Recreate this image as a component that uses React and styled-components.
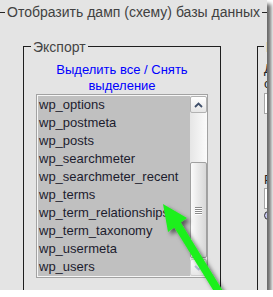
import React from "react";
import styled, { createGlobalStyle } from "styled-components";

const GlobalStyle = createGlobalStyle`
  html, body { margin: 0; padding: 0; background: #ffffff; }
  body { font-family: "Liberation Sans", Arial, sans-serif; }
  * { box-sizing: border-box; }
`;

const Frame = styled.div`
  position: relative;
  width: 267px;
  height: 290px;
  overflow: hidden;
  background: #e4e4e4;
  box-shadow: 4px 4px 4px rgba(0, 0, 0, 0.6);
`;

const OuterFieldset = styled.fieldset`
  margin: 0;
  width: 360px;
  min-width: 0;
  padding: 14px 0 0 0;
  border: none;
  border-top: 1px solid #262626;
`;

const OuterLegend = styled.legend`
  margin-left: 5px;
  padding: 0 2px;
  font-size: 14px;
  line-height: 24px;
  color: #414141;
  white-space: nowrap;
`;

const Row = styled.div`
  display: flex;
  gap: 36px;
  align-items: flex-start;
  padding-left: 23px;
`;

const Panel = styled.fieldset`
  flex: none;
  margin: 0;
  min-width: 0;
  width: ${(p) => p.$width}px;
  min-height: 290px;
  padding: ${(p) => p.$pad};
  border: 1px solid #1e1e1e;
`;

const PanelLegend = styled.legend`
  margin-left: ${(p) => p.$offset}px;
  padding: 1px 2px 0;
  font-size: 14px;
  line-height: 16px;
  color: ${(p) => p.$color};
  white-space: nowrap;
`;

const LinkBlock = styled.div`
  padding: 0 10px;
  text-align: center;
  font-size: 13px;
  line-height: 16px;
  color: #0000ff;
`;

const Link = styled.a`
  color: #0000ff;
  text-decoration: none;
  cursor: pointer;
`;

const ListBox = styled.div`
  margin: 0 12px;
  height: 184px;
  display: flex;
  padding: 1px 0 1px 1px;
  background: #f6f6f6;
  border: 1px solid #a2a2a2;
`;

const Items = styled.div`
  flex: 1;
  min-width: 0;
  background: #c0c0c0;
`;

const Item = styled.div`
  height: 18px;
  line-height: 18px;
  padding-left: 1px;
  font-size: 13px;
  color: #1c1c2e;
  white-space: nowrap;
  overflow: hidden;
`;

const Scrollbar = styled.div`
  width: 17px;
  flex: none;
  display: flex;
  flex-direction: column;
  background: linear-gradient(to right, #e6e6e6, #fbfbfb);
`;

const ScrollButton = styled.div`
  height: 17px;
  flex: none;
  margin-top: ${(p) => (p.$bottom ? "auto" : "0")};
  display: flex;
  align-items: center;
  justify-content: center;
  border: 1px solid ${(p) => (p.$bottom ? "#cfcfcf" : "#b2b2b2")};
  border-radius: 2px;
  background: linear-gradient(#ffffff, #e6e6e6);
`;

const Thumb = styled.div`
  height: 96px;
  flex: none;
  margin-top: 49px;
  display: flex;
  flex-direction: column;
  align-items: center;
  justify-content: center;
  gap: 1px;
  border: 1px solid #a0a0a0;
  border-radius: 2px;
  background: linear-gradient(to right, #fbfbfb 0%, #eaeaea 45%, #d8d8d8 100%);
`;

const Grip = styled.div`
  width: 7px;
  height: 1px;
  background: #8a8a8a;
  box-shadow: 0 1px 0 #ffffff;
`;

const SideBody = styled.div`
  padding: 6px 0 0 6px;
`;

const SideText = styled.div`
  font-size: 13px;
  line-height: 15px;
  color: #222;
  white-space: nowrap;
  margin-top: ${(p) => p.$top || 0}px;
`;

const Field = styled.div`
  width: 120px;
  height: ${(p) => p.$h}px;
  margin-top: ${(p) => p.$top}px;
  background: #ffffff;
  border: 1px solid #a5a5a5;
  padding: 2px 0 0 2px;
`;

const Mark = styled.div`
  width: 3px;
  height: 8px;
  background: #e8a030;
`;

const Radio = styled.div`
  width: 9px;
  height: 9px;
  margin-top: 2px;
  border-radius: 50%;
  border: 1px solid #333;
  background: #c6c6f0;
`;

const ArrowLayer = styled.svg`
  position: absolute;
  left: 0;
  top: 0;
  pointer-events: none;
`;

const tables = [
  "wp_options",
  "wp_postmeta",
  "wp_posts",
  "wp_searchmeter",
  "wp_searchmeter_recent",
  "wp_terms",
  "wp_term_relationships",
  "wp_term_taxonomy",
  "wp_usermeta",
  "wp_users",
];

export default function App() {
  return (
    <>
      <GlobalStyle />
      <Frame>
        <OuterFieldset>
          <OuterLegend>Отобразить дамп (схему) базы данных</OuterLegend>
          <Row>
            <Panel $width={198} $pad="7px 0 0 0">
              <PanelLegend $offset={7} $color="#444">Экспорт</PanelLegend>
              <LinkBlock>
                <Link>Выделить все</Link> / <Link>Снять выделение</Link>
              </LinkBlock>
              <ListBox>
                <Items>
                  {tables.map((t) => (
                    <Item key={t}>{t}</Item>
                  ))}
                </Items>
                <Scrollbar>
                  <ScrollButton>
                    <svg width="9" height="6" viewBox="0 0 9 6">
                      <polyline points="1,5 4.5,1.5 8,5" fill="none" stroke="#3f4f6a" strokeWidth="1.8" />
                    </svg>
                  </ScrollButton>
                  <Thumb>
                    <Grip />
                    <Grip />
                    <Grip />
                    <Grip />
                  </Thumb>
                  <ScrollButton $bottom>
                    <svg width="9" height="6" viewBox="0 0 9 6">
                      <polyline points="1,1 4.5,4.5 8,1" fill="none" stroke="#b4c2d8" strokeWidth="1.8" />
                    </svg>
                  </ScrollButton>
                </Scrollbar>
              </ListBox>
            </Panel>
            <Panel $width={160} $pad="0">
              <PanelLegend $offset={6} $color="#7a2a2a">Параметры SQL</PanelLegend>
              <SideBody>
                <SideText>Добавить</SideText>
                <SideText>собственный комментарий</SideText>
                <Field $h={21} $top={2} />
                <SideText $top={58}>Режим совместимости SQL</SideText>
                <Field $h={21} $top={1}>
                  <Mark />
                </Field>
                <Radio />
              </SideBody>
            </Panel>
          </Row>
        </OuterFieldset>
        <ArrowLayer width="267" height="290" viewBox="0 0 267 290">
          <defs>
            <filter id="arrowShadow" x="-30%" y="-30%" width="160%" height="160%">
              <feDropShadow dx="3" dy="3" stdDeviation="2" floodColor="#000" floodOpacity="0.55" />
            </filter>
          </defs>
          <polygon
            points="163,204 187,218 180.7,222.6 222.4,289.9 215.6,294.1 174.3,227.4 168,232"
            fill="#1ff01f"
            filter="url(#arrowShadow)"
          />
        </ArrowLayer>
      </Frame>
    </>
  );
}
